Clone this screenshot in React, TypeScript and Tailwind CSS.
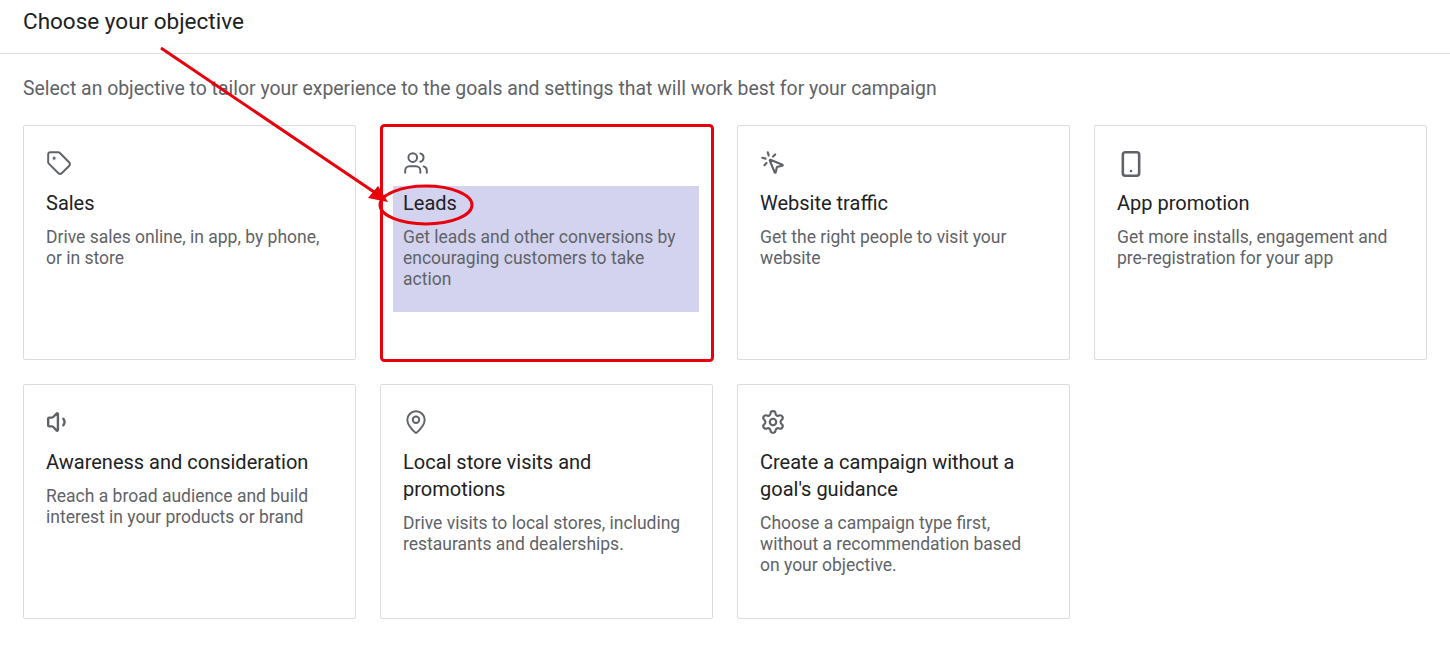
import React from "react";
import { Tag, Users, MousePointerClick, Smartphone, Volume1, MapPin, Settings } from "lucide-react";

const cards = [
  { icon: <Tag size={26} strokeWidth={1.8} />, title: "Sales", desc: "Drive sales online, in app, by phone, or in store" },
  { icon: <Users size={26} strokeWidth={1.8} />, title: "Leads", desc: "Get leads and other conversions by encouraging customers to take action", hl: true },
  { icon: <MousePointerClick size={26} strokeWidth={2} />, title: "Website traffic", desc: "Get the right people to visit your website" },
  { icon: <Smartphone size={28} strokeWidth={2.2} />, title: "App promotion", desc: "Get more installs, engagement and pre-registration for your app" },
  { icon: <Volume1 size={26} strokeWidth={2.2} />, title: "Awareness and consideration", desc: "Reach a broad audience and build interest in your products or brand" },
  { icon: <MapPin size={26} strokeWidth={1.8} />, title: "Local store visits and promotions", desc: "Drive visits to local stores, including restaurants and dealerships." },
  { icon: <Settings size={26} strokeWidth={2} />, title: "Create a campaign without a goal's guidance", desc: "Choose a campaign type first, without a recommendation based on your objective." },
];

export default function App() {
  return (
    <div className="relative w-[1450px] h-[647px] bg-white overflow-hidden" style={{ fontFamily: "Roboto, 'Liberation Sans', sans-serif" }}>
      <div className="h-[54px] border-b border-[#dadce0] pl-[23px] pt-[5px] text-[22.5px] text-[#202124]">Choose your objective</div>
      <div className="pl-[23px] pt-[22px] text-[19.4px] leading-[26px] text-[#5f6368]">Select an objective to tailor your experience to the goals and settings that will work best for your campaign</div>
      <div className="grid grid-cols-[333px_333px_333px_333px] gap-x-[24px] gap-y-[24px] pl-[23px] pt-[23px]">
        {cards.map((c) => (
          <div key={c.title} className="relative h-[235px] border border-[#dadce0] rounded-[2px] px-[22px] pt-[24px]">
            <div className="h-[30px] text-[#5f6368]">{c.icon}</div>
            <div className={c.hl ? "-mx-[10px] px-[10px] bg-[#d3d3ef] pb-[22px] mt-[6px] w-[306px]" : "mt-[6px]"}>
              <div className="text-[20px] text-[#202124] leading-[27px] pt-[4px] pr-[8px]">{c.title}</div>
              <div className="mt-[10px] text-[17.5px] leading-[21px] text-[#5f6368] pr-[8px]">{c.desc}</div>
            </div>
          </div>
        ))}
      </div>
      <svg className="absolute inset-0 pointer-events-none" width="1450" height="647">
        <rect x="381.5" y="125.5" width="331" height="235" rx="3" fill="none" stroke="#e8000b" strokeWidth="3" />
        <ellipse cx="426" cy="205" rx="46" ry="19" fill="none" stroke="#e8000b" strokeWidth="3" />
        <line x1="161" y1="48" x2="380" y2="196" stroke="#e8000b" strokeWidth="3" />
        <polygon points="388,202 368,198 378,186" fill="#e8000b" />
      </svg>
    </div>
  );
}
